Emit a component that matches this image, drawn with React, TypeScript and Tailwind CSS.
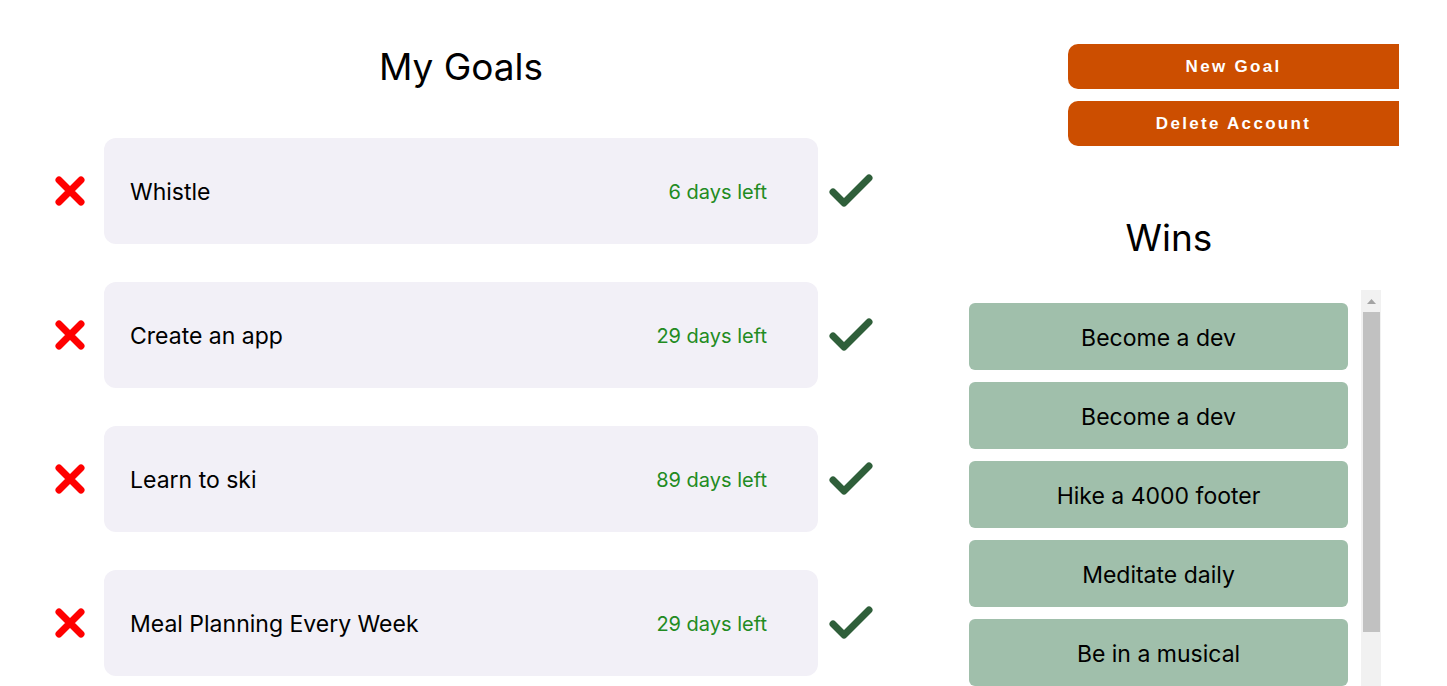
import React from "react";

const goals = [
  { name: "Whistle", days: "6 days left" },
  { name: "Create an app", days: "29 days left" },
  { name: "Learn to ski", days: "89 days left" },
  { name: "Meal Planning Every Week", days: "29 days left" },
];

const wins = [
  "Become a dev",
  "Become a dev",
  "Hike a 4000 footer",
  "Meditate daily",
  "Be in a musical",
  "Run a marathon",
];

function XIcon() {
  return (
    <svg width="32" height="32" viewBox="0 0 32 32" className="shrink-0">
      <path d="M5 5 L27 27 M27 5 L5 27" stroke="#ff0000" strokeWidth="7" strokeLinecap="round" fill="none" />
    </svg>
  );
}

function CheckIcon() {
  return (
    <svg width="46" height="36" viewBox="0 0 46 36" className="shrink-0">
      <path d="M5 19 L16 30 L41 5" stroke="#2f5f3a" strokeWidth="7" strokeLinecap="round" strokeLinejoin="round" fill="none" />
    </svg>
  );
}

export default function App() {
  return (
    <div
      className="w-[1447px] h-[686px] overflow-hidden bg-white flex text-black"
      style={{ fontFamily: "Inter, 'Noto Sans', sans-serif" }}
    >
      {/* Left column */}
      <div className="w-[922px] shrink-0 flex flex-col">
        <h1 className="mt-[45px] h-[44px] text-center text-[37px] leading-[44px] font-normal">My Goals</h1>
        <div className="mt-[49px] flex flex-col gap-[38px]">
          {goals.map((g, i) => (
            <div key={i} className="flex items-center pl-[54px]">
              <XIcon />
              <div className="ml-[18px] w-[714px] h-[106px] rounded-[12px] bg-[#f2f0f7] flex items-center justify-between pl-[26px] pr-[51px] pt-[2px]">
                <span className="text-[23px]">{g.name}</span>
                <span className="text-[20px] text-[#228b22]">{g.days}</span>
              </div>
              <div className="ml-[10px]">
                <CheckIcon />
              </div>
            </div>
          ))}
        </div>
      </div>

      {/* Right column */}
      <div className="flex-1 flex flex-col overflow-hidden">
        <div className="mt-[44px] pl-[146px] flex flex-col gap-[12px]">
          {["New Goal", "Delete Account"].map((b) => (
            <div
              key={b}
              className="w-[331px] h-[45px] bg-[#cc4e00] rounded-l-[10px] flex items-center justify-center text-white font-bold text-[17px] tracking-[2.3px]"
              style={{ fontFamily: "'Liberation Sans', Arial, sans-serif" }}
            >
              {b}
            </div>
          ))}
        </div>
        <h2 className="mt-[70px] h-[44px] pl-[47px] w-[447px] text-center text-[37px] leading-[44px] font-normal">Wins</h2>
        <div className="mt-[30px] ml-[47px] w-[412px] flex">
          <div className="w-[379px] pt-[13px] flex flex-col gap-[12px]">
            {wins.map((w, i) => (
              <div key={i} className="h-[67px] shrink-0 rounded-[6px] bg-[#a0bfab] flex items-center justify-center text-[23px] pt-[3px]">
                {w}
              </div>
            ))}
          </div>
          <div className="ml-[13px] w-[20px] h-[420px] bg-[#f1f1f1] flex flex-col items-center">
            <div className="h-[22px] flex items-center justify-center">
              <svg width="9" height="5" viewBox="0 0 9 5">
                <path d="M0 5 L4.5 0 L9 5 Z" fill="#a3a3a3" />
              </svg>
            </div>
            <div className="w-[17px] h-[320px] bg-[#c1c1c1]" />
          </div>
        </div>
      </div>
    </div>
  );
}
